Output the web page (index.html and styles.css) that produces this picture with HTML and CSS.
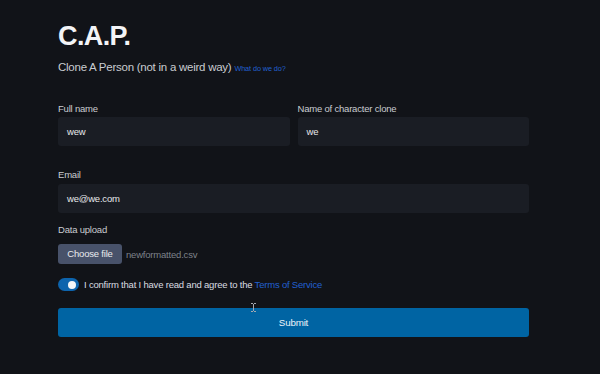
FILE: index.html
```html
<!DOCTYPE html>
<html>
<head>
<meta charset="utf-8">
<link rel="stylesheet" href="styles.css">
</head>
<body>
<main class="page">
  <h1 class="title">C.A.P.</h1>
  <p class="subtitle">Clone A Person (not in a weird way) <a class="small-link" href="#">What do we do?</a></p>
  <form class="form">
    <div class="row two">
      <div class="field">
        <label class="label">Full name</label>
        <div class="input">wew</div>
      </div>
      <div class="field">
        <label class="label">Name of character clone</label>
        <div class="input">we</div>
      </div>
    </div>
    <div class="field email">
      <label class="label">Email</label>
      <div class="input">we@we.com</div>
    </div>
    <div class="field upload">
      <label class="label">Data upload</label>
      <div class="file-row">
        <span class="file-btn">Choose file</span>
        <span class="file-name">newformatted.csv</span>
      </div>
    </div>
    <div class="confirm">
      <span class="toggle"><span class="knob"></span></span>
      <span class="confirm-text">I confirm that I have read and agree to the <a class="tos" href="#">Terms of Service</a></span>
    </div>
    <div class="submit-wrap">
      <button type="button" class="submit">Submit</button>
      <svg class="cursor" width="5" height="9" viewBox="0 0 5 9"><path d="M0 0.5h2M3 0.5h2M2.5 1v7M0 8.5h2M3 8.5h2" stroke="#a3a8b0" stroke-width="1" fill="none"/></svg>
    </div>
  </form>
</main>
</body>
</html>
```
FILE: styles.css
```css
* { box-sizing: border-box; }
html, body { margin: 0; padding: 0; }
body {
  background: #111318;
  color: #e6e8eb;
  font-family: "Liberation Sans", Arial, sans-serif;
  width: 600px;
  height: 374px;
  overflow: hidden;
}
.page {
  padding: 21px 0 0 58px;
  width: 529px;
}
.title {
  margin: 0;
  font-size: 27px;
  font-weight: 700;
  line-height: 30px;
  letter-spacing: -0.6px;
  color: #f3f4f6;
}
.subtitle {
  margin: 9px 0 0;
  font-size: 11.5px;
  line-height: 14px;
  letter-spacing: -0.25px;
  color: #c9ccd1;
}
.small-link {
  font-size: 7.3px;
  letter-spacing: -0.1px;
  color: #2160d0;
  text-decoration: none;
}
.form {
  margin-top: 27px;
}
.row.two {
  display: grid;
  grid-template-columns: 1fr 1fr;
  gap: 8px;
}
.label {
  display: block;
  font-size: 9.5px;
  line-height: 12px;
  letter-spacing: -0.2px;
  color: #c9ccd1;
  margin-bottom: 2px;
}
.input {
  height: 29px;
  background: #1a1d24;
  border-radius: 3px;
  padding: 0 9px;
  font-size: 9.5px;
  line-height: 29px;
  letter-spacing: -0.2px;
  color: #e6e8eb;
}
.email { margin-top: 23px; }
.email .label { margin-bottom: 3px; }
.upload { margin-top: 11px; }
.upload .label { margin-bottom: 8px; }
.file-row {
  display: flex;
  align-items: center;
  gap: 4px;
}
.file-btn {
  display: inline-block;
  width: 64px;
  height: 20px;
  line-height: 20px;
  text-align: center;
  background: #48526a;
  border-radius: 3px;
  font-size: 9.5px;
  letter-spacing: -0.2px;
  color: #e9ebef;
}
.file-name {
  font-size: 9.5px;
  letter-spacing: -0.2px;
  color: #7d828a;
}
.confirm {
  margin-top: 14px;
  display: flex;
  align-items: center;
  gap: 5px;
  height: 13px;
}
.toggle {
  position: relative;
  width: 21px;
  height: 13px;
  border-radius: 7px;
  background: #0d64ad;
}
.knob {
  position: absolute;
  right: 3px;
  top: 2.5px;
  width: 8px;
  height: 8px;
  border-radius: 50%;
  background: #f4f6f8;
}
.confirm-text {
  font-size: 9.5px;
  line-height: 13px;
  letter-spacing: -0.2px;
  color: #dadde1;
}
.tos {
  color: #2160d0;
  text-decoration: none;
}
.submit-wrap {
  position: relative;
  margin-top: 17px;
}
.submit {
  display: block;
  width: 100%;
  height: 29px;
  border: none;
  border-radius: 3px;
  background: #0064a3;
  color: #eef3f8;
  font-family: inherit;
  font-size: 9.8px;
  letter-spacing: -0.2px;
  padding: 0;
}
.cursor {
  position: absolute;
  left: 193px;
  top: -5px;
}
```
